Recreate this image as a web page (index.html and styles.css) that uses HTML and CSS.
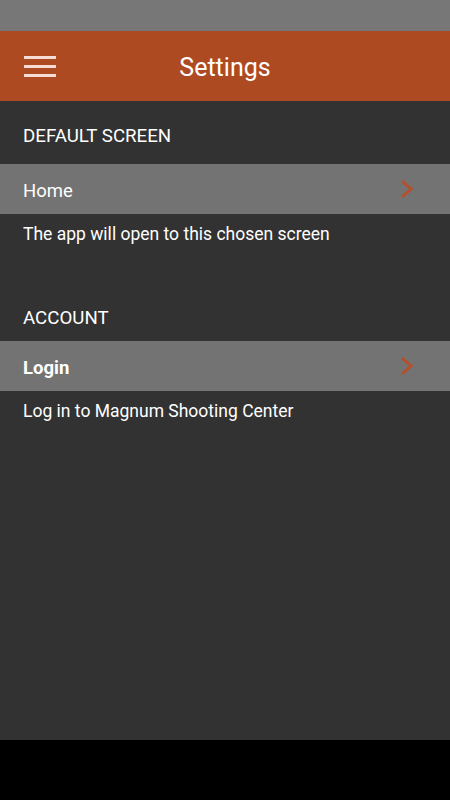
FILE: index.html
```html
<!DOCTYPE html>
<html lang="en">
<head>
<meta charset="utf-8">
<title>Settings</title>
<link rel="stylesheet" href="styles.css">
</head>
<body>
<div class="screen">
  <div class="status-bar"></div>
  <header class="app-bar">
    <button class="menu-btn" aria-label="Menu">
      <span class="menu-line"></span>
      <span class="menu-line"></span>
      <span class="menu-line"></span>
    </button>
    <h1 class="app-title">Settings</h1>
  </header>
  <main class="content">
    <section class="group group-first">
      <h2 class="group-title">DEFAULT SCREEN</h2>
      <div class="row">
        <span class="row-label">Home</span>
        <svg class="chevron" width="14" height="20" viewBox="0 0 14 20"><path d="M2 2 L11 10 L2 18" fill="none" stroke="#b4502b" stroke-width="3"/></svg>
      </div>
      <p class="group-note">The app will open to this chosen screen</p>
    </section>
    <section class="group group-second">
      <h2 class="group-title">ACCOUNT</h2>
      <div class="row">
        <span class="row-label row-label-strong">Login</span>
        <svg class="chevron" width="14" height="20" viewBox="0 0 14 20"><path d="M2 2 L11 10 L2 18" fill="none" stroke="#b4502b" stroke-width="3"/></svg>
      </div>
      <p class="group-note">Log in to Magnum Shooting Center</p>
    </section>
  </main>
  <div class="nav-bar"></div>
</div>
</body>
</html>
```
FILE: styles.css
```css
* { box-sizing: border-box; }

html, body {
  margin: 0;
  padding: 0;
  background: #000;
}

body {
  font-family: Roboto, "Noto Sans", sans-serif;
  color: #fff;
}

.screen {
  width: 450px;
  height: 800px;
  display: flex;
  flex-direction: column;
}

.status-bar {
  height: 31px;
  background: #777777;
}

.app-bar {
  height: 70px;
  background: #ae4a22;
  display: flex;
  align-items: center;
  justify-content: center;
  position: relative;
}

.menu-btn {
  position: absolute;
  left: 24px;
  top: 25px;
  width: 32px;
  height: 21px;
  padding: 0;
  border: 0;
  background: none;
  display: flex;
  flex-direction: column;
  justify-content: space-between;
}

.menu-line {
  display: block;
  height: 3px;
  background: #f6dcd3;
}

.app-title {
  margin: 4px 0 0;
  font-size: 25px;
  font-weight: 400;
  line-height: 28px;
  color: #fff;
}

.content {
  flex: 1;
  background: #323232;
}

.group-title {
  margin: 0;
  font-size: 18.7px;
  font-weight: 400;
  line-height: 24px;
  padding: 0 23px;
}

.group-first .group-title {
  padding-top: 23px;
  padding-bottom: 16px;
}

.group-second .group-title {
  margin-top: 60px;
  padding-bottom: 11px;
}

.row {
  height: 50px;
  background: #737373;
  display: flex;
  align-items: center;
  justify-content: space-between;
  padding: 0 36px 0 23px;
}

.row-label {
  font-size: 18.5px;
  line-height: 24px;
  padding-top: 3px;
}

.row-label-strong {
  font-weight: 700;
}

.chevron {
  display: block;
}

.group-note {
  margin: 8px 0 0;
  padding: 0 23px;
  font-size: 17.5px;
  line-height: 24px;
}

.nav-bar {
  height: 60px;
  background: #000;
}
```
